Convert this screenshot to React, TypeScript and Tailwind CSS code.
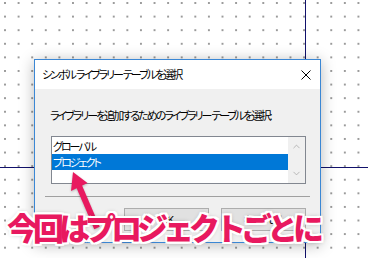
import { ChevronDown, ChevronUp } from "lucide-react";

// Yu Gothic UI is narrow; Noto CJK with a tight tracking gets close
const uiFont =
  "font-['Noto_Sans_CJK_JP','Noto_Sans',sans-serif] [font-feature-settings:'palt'] text-[11px] tracking-[-2px]";

interface ListRowProps {
  label: string;
  selected?: boolean;
}

function ListRow({ label, selected = false }: ListRowProps) {
  return (
    <div
      className={`h-[16px] pl-px leading-[16px] ${
        selected ? "bg-[#0078d7] text-white" : "text-black"
      }`}
    >
      {label}
    </div>
  );
}

function DialogButton({ label }: { label: string }) {
  return (
    <button className="h-[23px] w-[85px] border border-[#adadad] bg-[#e1e1e1] text-black">
      {label}
    </button>
  );
}

/**
 * Windows-style "pick a symbol library table" dialog sitting on the
 * schematic canvas.
 */
function LibraryTableDialog() {
  return (
    <div
      className={`absolute left-[34px] top-[59px] flex h-[184px] w-[287px] flex-col border border-[#3b87d4] bg-[#f0f0f0] shadow-[0_2px_14px_rgba(0,0,0,0.28)] ${uiFont}`}
    >
      <div className="flex h-[29px] items-center justify-between bg-white pl-[7px] pr-[9px]">
        <span className="whitespace-nowrap text-black">シンボル&nbsp; ライブラリー&nbsp; テーブルを選択</span>
        <svg width="10" height="10" viewBox="0 0 10 10" className="text-black">
          <path d="M0.5 0.5 L9.5 9.5 M9.5 0.5 L0.5 9.5" stroke="currentColor" strokeWidth="1" />
        </svg>
      </div>

      <div className="flex flex-1 flex-col px-[10px] pt-[18px]">
        <p className="ml-[5px] h-[16px] whitespace-nowrap leading-[16px] text-black">
          ライブラリーを追加するためのライブラリー&nbsp; テーブルを選択:
        </p>

        <div className="ml-[6px] mt-[13px] flex h-[48px] w-[255px] border border-[#828790] bg-white">
          <div className="flex-1 pt-px">
            <ListRow label="グローバル" />
            <ListRow label="プロジェクト" selected />
          </div>
          <div className="flex w-[17px] flex-col items-center justify-between bg-[#f0f0f0] py-[4px] text-[#a3a3a3]">
            <ChevronUp size={11} strokeWidth={1.6} />
            <ChevronDown size={11} strokeWidth={1.6} />
          </div>
        </div>

        <div className="mt-[12px] h-px w-[265px] bg-[#a0a0a0]" />

        <div className="mr-[4px] mt-[11px] flex justify-end gap-[12px]">
          <DialogButton label="OK" />
          <DialogButton label="キャンセル" />
        </div>
      </div>
    </div>
  );
}

export default function App() {
  return (
    <div className="relative h-[258px] w-[368px] overflow-hidden bg-white bg-[radial-gradient(circle,#9a9a9a_0.7px,transparent_1.1px)] bg-[size:13.6px_13.6px] bg-[position:-1.8px_-3.8px]">
      {/* schematic sheet lines behind the dialog */}
      <div className="absolute left-[305px] top-0 h-full w-px bg-[#11116b]" />
      <div className="absolute left-0 top-[167px] h-px w-full bg-[#11116b]" />

      <LibraryTableDialog />

      {/* annotation arrow */}
      <svg
        className="pointer-events-none absolute left-0 top-0 drop-shadow-[0_1px_1px_rgba(0,0,0,0.25)]"
        width="368"
        height="258"
      >
        <line x1="79" y1="186" x2="97" y2="228" stroke="#e8195f" strokeWidth="6" />
        <polygon points="73,172 87.5,183 71,191" fill="#e8195f" />
      </svg>

      <div className="absolute left-[7px] top-[211px] whitespace-nowrap font-['Noto_Sans_CJK_JP',sans-serif] text-[31px] font-black leading-none tracking-[-5px] text-[#e8195f] [text-shadow:2px_0_0_#fff,-2px_0_0_#fff,0_2px_0_#fff,0_-2px_0_#fff,2px_2px_0_#fff,-2px_-2px_0_#fff,2px_-2px_0_#fff,-2px_2px_0_#fff,0_0_5px_rgba(0,0,0,0.45)]">
        今回はプロジェクトごとに
      </div>
    </div>
  );
}
